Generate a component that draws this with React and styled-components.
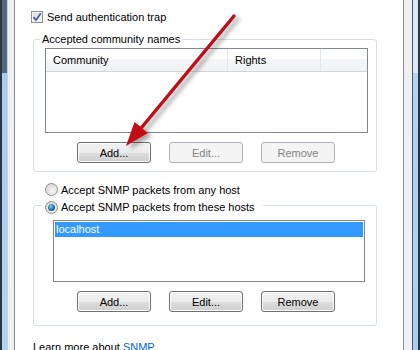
import styled, { createGlobalStyle } from "styled-components";

const GlobalStyle = createGlobalStyle`
  html, body {
    margin: 0;
    width: 420px;
    height: 350px;
    overflow: hidden;
  }
  body {
    font-family: "Liberation Sans", Arial, sans-serif;
    font-size: 11px;
    color: #000;
  }
`;

const Window = styled.div`
  position: relative;
  display: flex;
  width: 420px;
  height: 350px;
  overflow: hidden;
  background: #f0f0f0;
`;

const FrameEdge = styled.div`
  box-sizing: border-box;
  width: 8px;
  flex-shrink: 0;
  border-left: ${({ $side }) => ($side === "left" ? "2px solid #2a3644" : "1px solid #4b5866")};
  border-right: ${({ $side }) => ($side === "left" ? "1px solid #c3d2e2" : "2px solid #2a3644")};
  background: ${({ $side }) =>
    $side === "left"
      ? "linear-gradient(to bottom, #55677a 0, #55677a 73px, #a9cbef 73px, #b4d3f3 100%)"
      : "linear-gradient(to bottom, #dbe9f8 0, #dbe9f8 73px, #b3d3f5 73px, #aacdf1 100%)"};
`;

const Gutter = styled.div`
  width: ${({ $w }) => $w}px;
  flex-shrink: 0;
  background: #f0f0f0;
`;

const TabPage = styled.div`
  box-sizing: border-box;
  width: 390px;
  flex-shrink: 0;
  background: #fff;
  border-left: 1px solid #898c95;
  border-right: 1px solid #898c95;
  display: flex;
  flex-direction: column;
`;

const OptionRow = styled.label`
  display: flex;
  align-items: center;
  gap: ${({ $gap }) => $gap}px;
  height: 14px;
  margin: ${({ $m }) => $m};
  white-space: nowrap;
`;

const CheckBox = styled.span`
  box-sizing: border-box;
  width: 12px;
  height: 12px;
  border: 1px solid #8e8f8f;
  background: linear-gradient(135deg, #dcdcdc 0%, #f4f4f4 100%);
  box-shadow: inset 0 0 0 1px #f6f6f6;
  display: flex;
  align-items: center;
  justify-content: center;
`;

const Radio = styled.span`
  box-sizing: border-box;
  width: 13px;
  height: 13px;
  border-radius: 50%;
  border: 1px solid #8e8f8f;
  background: radial-gradient(circle at 60% 65%, #f6f6f6 0%, #e2e2e2 55%, #c9c9c9 100%);
  display: flex;
  align-items: center;
  justify-content: center;
  &::after {
    content: "";
    display: ${({ $checked }) => ($checked ? "block" : "none")};
    width: 7px;
    height: 7px;
    border-radius: 50%;
    background: radial-gradient(circle at 40% 35%, #8fd2f5 0%, #2b7fb8 45%, #123a5c 100%);
  }
`;

const Group = styled.fieldset`
  box-sizing: border-box;
  width: 344px;
  margin: ${({ $m }) => $m};
  padding: 0;
  border: 1px solid #d5dfe5;
  border-radius: 3px;
  min-inline-size: 0;
`;

const Caption = styled.legend`
  margin-left: ${({ $ml }) => $ml}px;
  padding: ${({ $pad }) => $pad};
  line-height: 14px;
  white-space: nowrap;
`;

const GroupBody = styled.div`
  padding: ${({ $pad }) => $pad};
  display: flex;
  flex-direction: column;
`;

const ListView = styled.div`
  box-sizing: border-box;
  width: 323px;
  height: 85px;
  border: 1px solid #828790;
  background: #fff;
`;

const Header = styled.div`
  display: flex;
  height: 22px;
  border-bottom: 1px solid #d5d5d5;
  background: linear-gradient(to bottom, #ffffff 0, #ffffff 45%, #f5f6f7 46%, #f1f2f4 100%);
`;

const HeaderCell = styled.div`
  box-sizing: border-box;
  width: ${({ $w }) => $w}px;
  padding-left: 7px;
  border-right: 1px solid #e3e5e8;
  display: flex;
  align-items: center;
`;

const ListBox = styled.div`
  box-sizing: border-box;
  width: 312px;
  height: 62px;
  padding: 1px;
  border: 1px solid #828790;
  background: #fff;
`;

const ListItem = styled.div`
  height: 15px;
  line-height: 15px;
  padding-left: 1px;
  color: ${({ $selected }) => ($selected ? "#fff" : "#000")};
  background: ${({ $selected }) => ($selected ? "#3399ff" : "transparent")};
`;

const ButtonRow = styled.div`
  display: flex;
  gap: 18px;
  margin: 9px 0 0 ${({ $indent }) => $indent}px;
`;

const Button = styled.button`
  box-sizing: border-box;
  width: 74px;
  height: 21px;
  padding: 0;
  font: inherit;
  border-radius: 3px;
  border: 1px solid ${({ disabled }) => (disabled ? "#adb2b5" : "#707070")};
  color: ${({ disabled }) => (disabled ? "#838383" : "#000")};
  background: ${({ disabled }) =>
    disabled
      ? "#f4f4f4"
      : "linear-gradient(to bottom, #f2f2f2 0%, #ebebeb 50%, #dddddd 51%, #cfcfcf 100%)"};
  box-shadow: inset 0 0 0 1px ${({ disabled }) => (disabled ? "#f4f4f4" : "#fcfcfc")};
`;

const Footer = styled.div`
  margin: 14px 0 0 18px;
  line-height: 14px;
`;

const Link = styled.span`
  color: #0066cc;
`;

const Overlay = styled.svg`
  position: absolute;
  left: 0;
  top: 0;
  pointer-events: none;
`;

function Check() {
  return (
    <svg width="10" height="10" viewBox="0 0 10 10">
      <path d="M1.5 5.2 L4 8 L8.8 1.3" fill="none" stroke="#4a5f97" strokeWidth="1.8" />
    </svg>
  );
}

function Buttons({ indent, editDisabled, removeDisabled }) {
  return (
    <ButtonRow $indent={indent}>
      <Button>Add...</Button>
      <Button disabled={editDisabled}>Edit...</Button>
      <Button disabled={removeDisabled}>Remove</Button>
    </ButtonRow>
  );
}

function Arrow() {
  // red annotation arrow pointing at the first Add... button
  return (
    <Overlay width="420" height="350" viewBox="0 0 420 350">
      <defs>
        <filter id="shade" x="-20%" y="-20%" width="140%" height="140%">
          <feDropShadow dx="4" dy="3" stdDeviation="2" floodColor="#000" floodOpacity="0.35" />
        </filter>
      </defs>
      <g filter="url(#shade)">
        <line x1="234" y1="16" x2="142" y2="127" stroke="#c00c16" strokeWidth="3.5" strokeLinecap="round" />
        <polygon points="126,146 134.5,122 148,133" fill="#c00c16" />
      </g>
    </Overlay>
  );
}

export default function App() {
  return (
    <>
      <GlobalStyle />
      <Window>
        <FrameEdge $side="left" />
        <Gutter $w={6} />
        <TabPage>
          <OptionRow $gap={4} $m="11px 0 0 16px">
            <CheckBox>
              <Check />
            </CheckBox>
            Send authentication trap
          </OptionRow>

          <Group $m="9px 0 0 18px">
            <Caption $ml={6} $pad="0 2px">Accepted community names</Caption>
            <GroupBody $pad="2px 8px 8px 11px">
              <ListView>
                <Header>
                  <HeaderCell $w={182}>Community</HeaderCell>
                  <HeaderCell $w={93}>Rights</HeaderCell>
                </Header>
              </ListView>
              <Buttons indent={32} editDisabled removeDisabled />
            </GroupBody>
          </Group>

          <OptionRow $gap={3} $m="11px 0 0 30px">
            <Radio />
            Accept SNMP packets from any host
          </OptionRow>

          <Group $m="0 0 0 18px">
            <Caption $ml={8} $pad="4px 8px 0 3px">
              <OptionRow $gap={3} $m="0">
                <Radio $checked />
                Accept SNMP packets from these hosts
              </OptionRow>
            </Caption>
            <GroupBody $pad="6px 8px 13px 19px">
              <ListBox>
                <ListItem $selected>localhost</ListItem>
              </ListBox>
              <Buttons indent={24} />
            </GroupBody>
          </Group>

          <Footer>
            Learn more about <Link>SNMP</Link>
          </Footer>
        </TabPage>
        <Gutter $w={8} />
        <FrameEdge $side="right" />
        <Arrow />
      </Window>
    </>
  );
}
